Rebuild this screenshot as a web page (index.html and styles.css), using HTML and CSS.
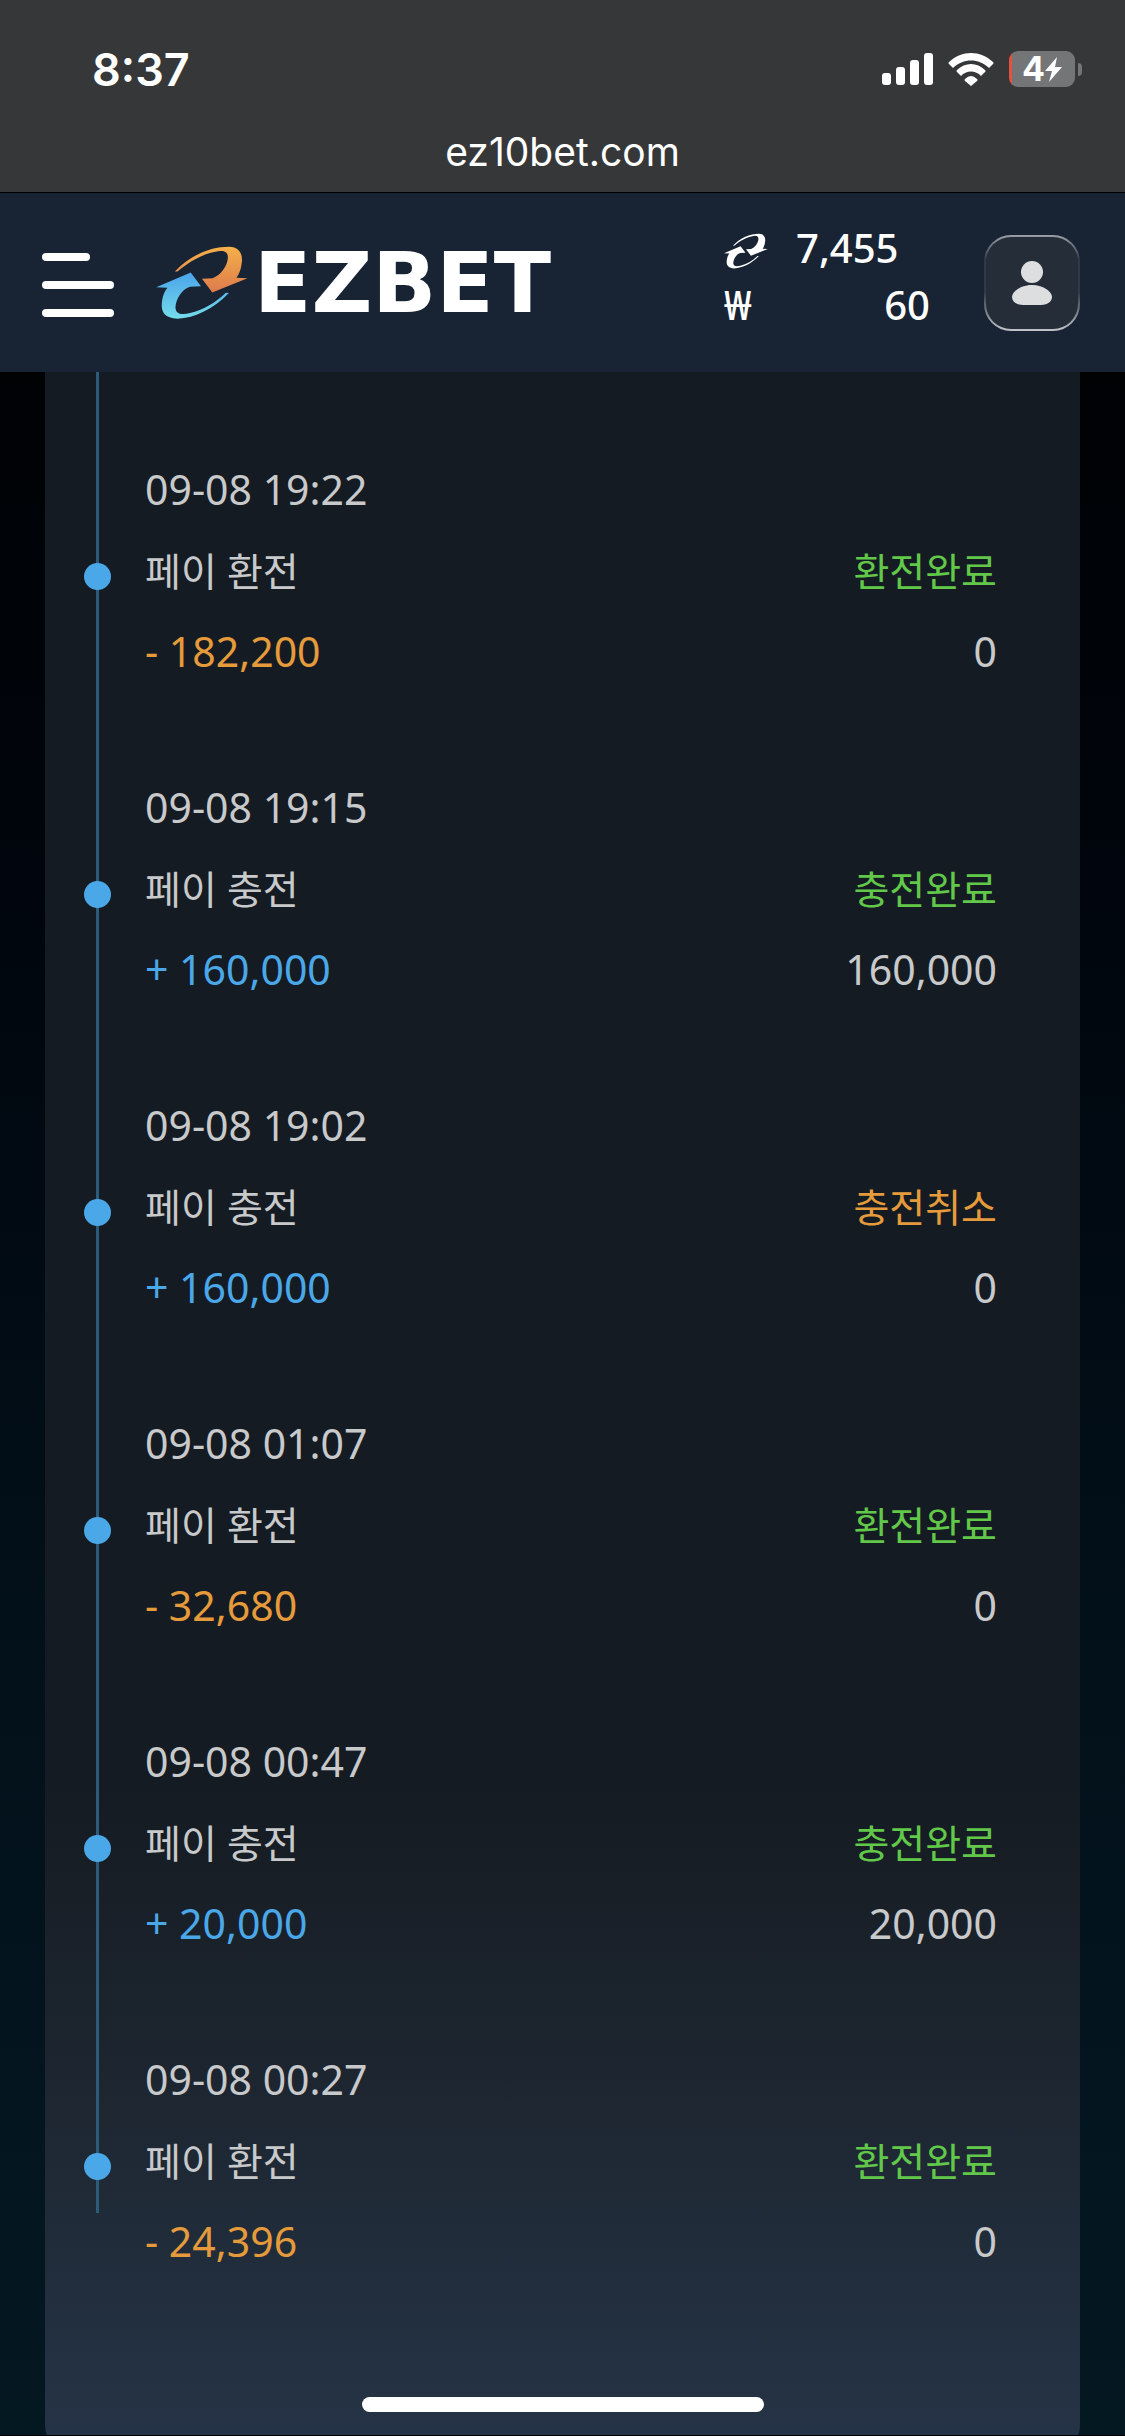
FILE: index.html
```html
<!DOCTYPE html>
<html lang="ko">
<head>
<meta charset="utf-8">
<meta name="viewport" content="width=device-width, initial-scale=1">
<title>EZBET</title>
<link rel="stylesheet" href="styles.css">
</head>
<body>
<svg class="defs" aria-hidden="true">
  <defs>
    <linearGradient id="orange" x1="0" y1="0" x2="0" y2="1"><stop offset="0" stop-color="#f5b04a"/><stop offset="1" stop-color="#dd7b4c"/></linearGradient>
    <linearGradient id="blue" x1="0" y1="0" x2="0" y2="1"><stop offset="0" stop-color="#4aa3ea"/><stop offset="1" stop-color="#74dcea"/></linearGradient>
    <path id="arrow-down" d="M104 137C150 88 210 62 268 62C300 63 309 85 306 110C304 130 298 145 290 156L323 157L217 200L186 159L218 157C242 150 263 120 264 95C264 77 252 73 235 76C190 82 148 107 112 137Z"/>
    <path id="arrow-up" d="M152 140L183 181L150 183C125 190 107 222 106 245C107 266 125 268 150 262C190 253 225 232 258 201L267 202C220 250 165 278 112 279C75 278 62 260 65 232C67 210 74 195 82 186L48 184Z"/>
  </defs>
</svg>
<div class="screen">
  <div class="status">
    <div class="status-row">
      <time class="clock">8:37</time>
      <div class="status-icons">
        <svg class="signal" viewBox="0 0 51 32" aria-hidden="true"><rect x="0" y="20" width="9" height="12" rx="3"/><rect x="14" y="14" width="9" height="18" rx="3"/><rect x="28" y="7" width="9" height="25" rx="3"/><rect x="42" y="0" width="9" height="32" rx="3"/></svg>
        <svg class="wifi" viewBox="0 0 46 33" aria-hidden="true"><path d="M1 9C14-3 32-3 45 9Q46 10 45 11L41 15C31 5 15 5 5 15L1 11Q0 10 1 9ZM9 17C17 9 29 9 37 17Q38 18 37 19L33 23C28 17 18 17 13 23L9 19Q8 18 9 17ZM17 26Q23 20 29 26Q30 27 29 28L23 33L17 28Q16 27 17 26Z"/></svg>
        <div class="battery"><span>4</span><svg class="bolt" viewBox="0 0 17 25" aria-hidden="true"><path d="M12 0L0 14H7L4 25L17 10H10Z"/></svg></div>
      </div>
    </div>
    <div class="domain">ez10bet.com</div>
  </div>
  <header class="header">
    <button class="menu" aria-label="메뉴"><i></i><i></i><i></i></button>
    <a class="logo" href="#">
      <svg class="logo-mark" viewBox="48 60 276 220" aria-hidden="true"><use href="#arrow-down" fill="url(#orange)"/><use href="#arrow-up" fill="url(#blue)"/></svg>
      <span>EZBET</span>
    </a>
    <div class="balances">
      <svg class="point-mark" viewBox="48 60 276 220" aria-hidden="true"><use href="#arrow-down"/><use href="#arrow-up"/></svg>
      <span class="points">7,455</span>
      <span class="won">₩</span>
      <span class="cash">60</span>
    </div>
    <button class="profile" aria-label="내 정보"><svg viewBox="0 0 40 44" aria-hidden="true"><circle cx="20" cy="11" r="11"/><path d="M20 24C32 24 40 31 40 36C40 40 36 44 29 44H11C4 44 0 40 0 36C0 31 8 24 20 24Z"/></svg></button>
  </header>
  <main class="content">
    <section class="card">
      <ul class="timeline">
        <li class="entry"><i class="dot"></i><time class="date">09-08 19:22</time><span class="kind">페이 환전</span><span class="state done">환전완료</span><span class="amount minus">- 182,200</span><span class="balance">0</span></li>
        <li class="entry"><i class="dot"></i><time class="date">09-08 19:15</time><span class="kind">페이 충전</span><span class="state done">충전완료</span><span class="amount plus">+ 160,000</span><span class="balance">160,000</span></li>
        <li class="entry"><i class="dot"></i><time class="date">09-08 19:02</time><span class="kind">페이 충전</span><span class="state cancelled">충전취소</span><span class="amount plus">+ 160,000</span><span class="balance">0</span></li>
        <li class="entry"><i class="dot"></i><time class="date">09-08 01:07</time><span class="kind">페이 환전</span><span class="state done">환전완료</span><span class="amount minus">- 32,680</span><span class="balance">0</span></li>
        <li class="entry"><i class="dot"></i><time class="date">09-08 00:47</time><span class="kind">페이 충전</span><span class="state done">충전완료</span><span class="amount plus">+ 20,000</span><span class="balance">20,000</span></li>
        <li class="entry"><i class="dot"></i><time class="date">09-08 00:27</time><span class="kind">페이 환전</span><span class="state done">환전완료</span><span class="amount minus">- 24,396</span><span class="balance">0</span></li>
      </ul>
    </section>
  </main>
  <div class="home-indicator"></div>
</div>
</body>
</html>
```
FILE: styles.css
```css
* { box-sizing: border-box; }

body {
  margin: 0;
  background: #000;
  color: #c8c9cb;
  font-family: "Noto Sans", "Noto Sans CJK KR", sans-serif;
  font-size: 41px;
}

button {
  padding: 0;
  border: 0;
  background: none;
  cursor: pointer;
}

.defs {
  position: absolute;
  width: 0;
  height: 0;
}

.screen {
  position: relative;
  display: flex;
  flex-direction: column;
  height: 100vh;
  border-bottom: 1px solid #000;
}

/* Status bar */
.status {
  flex: none;
  padding-top: 40px;
  border-bottom: 1px solid #000;
  background: #363739;
  color: #fff;
  font-family: Inter, "Liberation Sans", sans-serif;
}

.status-row {
  display: flex;
  align-items: center;
  justify-content: space-between;
  height: 58px;
  padding: 0 50px 0 92px;
}

.clock {
  font-size: 45px;
  font-weight: 600;
}

.status-icons {
  display: flex;
  align-items: center;
  gap: 15px;
  fill: #fff;
}

.signal { width: 51px; height: 32px; }
.wifi { width: 46px; height: 33px; }

.battery {
  position: relative;
  display: flex;
  align-items: center;
  justify-content: center;
  width: 66px;
  height: 36px;
  border-radius: 9px;
  background: linear-gradient(90deg, #e5503f 3px, #747577 3px);
  font-size: 34px;
  font-weight: 700;
  line-height: 36px;
}

.battery::after {
  content: "";
  position: absolute;
  left: 69px;
  width: 4px;
  height: 13px;
  border-radius: 0 7px 7px 0;
  background: #747577;
}

.bolt { width: 17px; height: 25px; }

.domain {
  height: 94px;
  font-size: 39px;
  line-height: 108px;
  text-align: center;
}

/* Site header */
.header {
  display: flex;
  flex: none;
  align-items: center;
  height: 179px;
  padding: 0 45px 0 42px;
  background: #182333;
  color: #fff;
}

.menu {
  display: grid;
  gap: 20px;
  width: 72px;
  margin-right: 42px;
  padding-top: 4px;
}

.menu i {
  height: 8px;
  border-radius: 4px;
  background: #fff;
}

.menu i:first-child { width: 48px; }

.logo {
  display: flex;
  align-items: center;
  gap: 6px;
  margin-right: auto;
  color: #fff;
  font-family: "DejaVu Sans", sans-serif;
  font-size: 84px;
  font-weight: 700;
  line-height: 80px;
  text-decoration: none;
}

.logo-mark { width: 92px; height: 73px; }

.balances {
  display: grid;
  grid-template-columns: 72px 91px 43px;
  grid-auto-rows: 57px;
  align-items: center;
  margin-right: 54px;
  padding-bottom: 14px;
  font-size: 40px;
  font-weight: 500;
}

.point-mark {
  width: 44px;
  height: 36px;
  margin-top: 8px;
  fill: #fff;
}

.won { grid-column: 1; }

.cash {
  grid-column: 2 / 4;
  text-align: right;
}

.profile {
  display: grid;
  place-items: center;
  width: 96px;
  height: 96px;
  border: 2px solid transparent;
  border-radius: 27px;
  background:
    linear-gradient(#242d38, #242d38) padding-box,
    linear-gradient(#9ba0a8, #303a47 25%, #303a47 60%, #c3c6cb) border-box;
}

.profile svg {
  width: 40px;
  height: 44px;
  fill: #dddee0;
}

/* Transaction history */
.content {
  flex: 1;
  min-height: 0;
  overflow: hidden;
  padding: 0 45px;
  background: linear-gradient(#000204, #00060e 28%, #021019 60%, #041822);
}

.card {
  padding: 0 83px 172px 39px;
  border-radius: 0 0 30px 30px;
  background: linear-gradient(#151b22, #151b22 68%, #1d2630 82%, #253447);
}

.timeline {
  position: relative;
  display: grid;
  gap: 75px;
  margin: 0;
  padding: 78px 0 0;
  list-style: none;
}

.timeline::before {
  content: "";
  position: absolute;
  top: 0;
  bottom: 70px;
  left: 12px;
  width: 3px;
  background: #2d5b7a;
}

.entry {
  position: relative;
  display: grid;
  grid-template-columns: 27px 1fr auto;
  grid-template-rows: repeat(3, 81px);
  column-gap: 34px;
  align-items: center;
}

.entry > time,
.entry > span { padding-bottom: 3px; }

.dot {
  grid-row: 1 / 4;
  width: 27px;
  height: 27px;
  margin-top: 10px;
  border-radius: 50%;
  background: #4ba8e8;
}

.date { grid-column: 2 / 4; }

.entry > .kind,
.entry > .state {
  padding-bottom: 6px;
  font-size: 39px;
}

.state,
.balance { text-align: right; }

.done { color: #62c84a; }
.cancelled,
.minus { color: #e59b3c; }
.plus { color: #4ba8e8; }

.home-indicator {
  position: absolute;
  bottom: 23px;
  left: 50%;
  width: 402px;
  height: 15px;
  border-radius: 8px;
  background: #fff;
  transform: translateX(-50%);
}
```
